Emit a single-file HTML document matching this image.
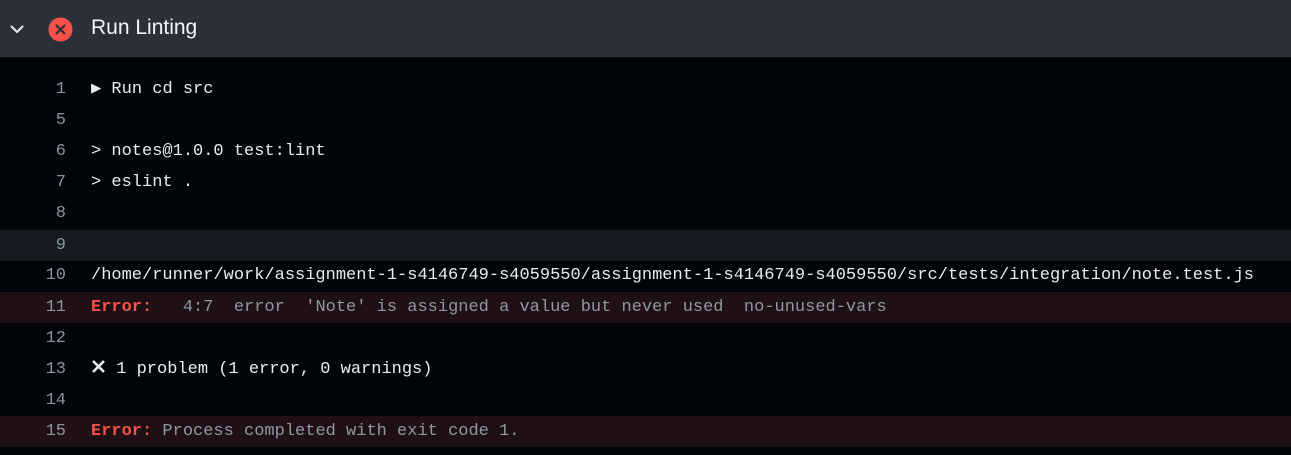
<!DOCTYPE html>
<html><head><style>
html,body{margin:0;padding:0;background:#010409;width:1291px;height:455px;overflow:hidden}
.hdr{position:absolute;left:0;top:0;width:1291px;height:57px;background:#2b3038;border-bottom:1px solid #30363d;box-sizing:border-box}
.hdr .t{position:absolute;left:91px;top:16px;font:21px "Liberation Sans",sans-serif;color:#f0f6fc}
.row{position:absolute;left:0;width:1291px;height:31px;font:17px/32px "Liberation Mono",monospace;color:#e6edf3;white-space:pre}
.row .n{position:absolute;left:0;width:66px;text-align:right;color:#8b949e}
.row .c{position:absolute;left:91px}
.hl{background:#161b22}
.er{background:#1e1014}
.red{color:#f85149;font-weight:bold}
.g{color:#9198a1}
</style></head><body>
<div class="hdr">
<svg style="position:absolute;left:9px;top:21px" width="16" height="16" viewBox="0 0 16 16"><path d="M2.5 5.5 L8 11 L13.5 5.5" stroke="#e6edf3" stroke-width="2" fill="none" stroke-linecap="round" stroke-linejoin="round"/></svg>
<svg style="position:absolute;left:48px;top:17px" width="25" height="25" viewBox="0 0 25 25"><circle cx="12.5" cy="12.5" r="12" fill="#f85149"/><path d="M8.5 8.5 L16.5 16.5 M16.5 8.5 L8.5 16.5" stroke="#2b3038" stroke-width="2.2" stroke-linecap="round"/></svg>
<div class="t">Run Linting</div>
</div>
<div class="row" style="top:74px"><span class="n">1</span><span class="c">▶ Run cd src</span></div>
<div class="row" style="top:105px"><span class="n">5</span></div>
<div class="row" style="top:136px"><span class="n">6</span><span class="c">&gt; notes@1.0.0 test:lint</span></div>
<div class="row" style="top:167px"><span class="n">7</span><span class="c">&gt; eslint .</span></div>
<div class="row" style="top:198px"><span class="n">8</span></div>
<div class="row hl" style="top:230px"><span class="n">9</span></div>
<div class="row" style="top:260px"><span class="n">10</span><span class="c">/home/runner/work/assignment-1-s4146749-s4059550/assignment-1-s4146749-s4059550/src/tests/integration/note.test.js</span></div>
<div class="row er" style="top:292px"><span class="n">11</span><span class="c"><span class="red">Error:</span><span class="g">   4:7  error  'Note' is assigned a value but never used  no-unused-vars</span></span></div>
<div class="row" style="top:323px"><span class="n">12</span></div>
<div class="row" style="top:354px"><span class="n">13</span><span class="c"><svg width="15" height="15" viewBox="0 0 15 15" style="vertical-align:-1px"><path d="M2 2 L13 13 M13 2 L2 13" stroke="#e6edf3" stroke-width="2.6"/></svg> 1 problem (1 error, 0 warnings)</span></div>
<div class="row" style="top:385px"><span class="n">14</span></div>
<div class="row er" style="top:416px"><span class="n">15</span><span class="c"><span class="red">Error:</span><span class="g"> Process completed with exit code 1.</span></span></div>
</body></html>
